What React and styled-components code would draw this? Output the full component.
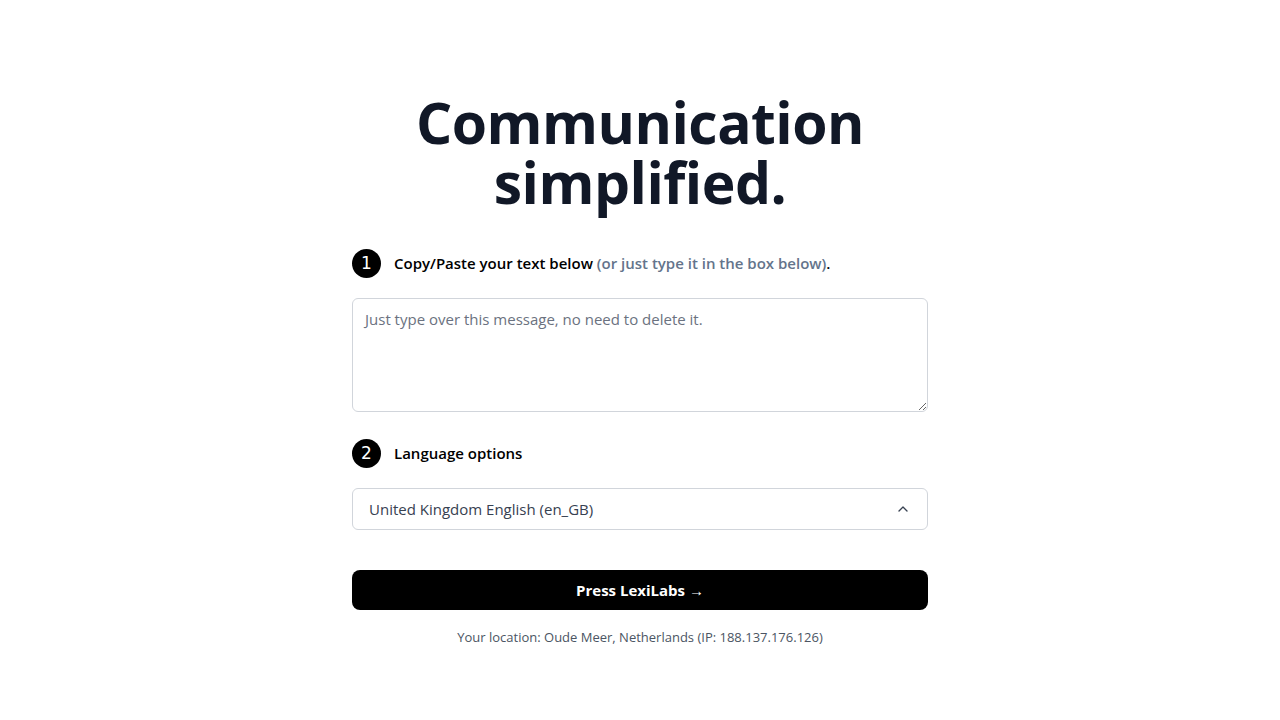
import React from "react";
import styled, { createGlobalStyle } from "styled-components";
import { ChevronUp } from "lucide-react";

const GlobalStyle = createGlobalStyle`
  * {
    box-sizing: border-box;
  }

  body {
    margin: 0;
    background: #ffffff;
    font-family: "Open Sans", "Noto Sans", sans-serif;
    color: #111827;
  }
`;

const StepLabel = ({ number, children }) => {
  return (
    <StepRow>
      <StepBadge>{number}</StepBadge>
      <p>{children}</p>
    </StepRow>
  );
};

const App = () => {
  return (
    <>
      <GlobalStyle />
      <PageWrapper>
        <Main>
          <Title>
            <span>Communication</span>
            <span>simplified.</span>
          </Title>

          <Section>
            <StepLabel number="1">
              Copy/Paste your text below{" "}
              <Muted>(or just type it in the box below)</Muted>.
            </StepLabel>
            <TextBox placeholder="Just type over this message, no need to delete it." />
          </Section>

          <Section>
            <StepLabel number="2">Language options</StepLabel>
            <SelectBox>
              <span>United Kingdom English (en_GB)</span>
              <ChevronUp size={16} strokeWidth={2} />
            </SelectBox>
          </Section>

          <SubmitButton>Press LexiLabs →</SubmitButton>
          <Location>
            Your location: Oude Meer, Netherlands (IP: 188.137.176.126)
          </Location>
        </Main>
      </PageWrapper>
    </>
  );
};

export default App;

const PageWrapper = styled.div`
  display: flex;
  justify-content: center;
  padding-top: 92px;
`;

const Main = styled.main`
  width: 576px;
  display: flex;
  flex-direction: column;
`;

const Title = styled.h1`
  margin: 0 0 36px;
  display: flex;
  flex-direction: column;
  align-items: center;
  text-align: center;
  font-size: 57px;
  line-height: 60px;
  font-weight: 700;
  letter-spacing: -0.5px;
  color: #111827;

  span {
    display: block;
  }
`;

const Section = styled.section`
  display: flex;
  flex-direction: column;
  gap: 20px;
  margin-bottom: 26px;
`;

const StepRow = styled.div`
  display: flex;
  align-items: center;
  gap: 13px;
  height: 30px;

  p {
    margin: 0;
    font-size: 15px;
    font-weight: 600;
    color: #000000;
  }
`;

const StepBadge = styled.span`
  width: 29px;
  height: 29px;
  border-radius: 50%;
  background: #000000;
  color: #ffffff;
  display: flex;
  align-items: center;
  justify-content: center;
  font-size: 17px;
  font-weight: 400;
  font-family: "DejaVu Sans", sans-serif;
  flex-shrink: 0;
`;

const Muted = styled.span`
  color: #64748b;
`;

const TextBox = styled.textarea`
  width: 100%;
  height: 114px;
  padding: 10px 12px;
  border: 1px solid #d1d5db;
  border-radius: 6px;
  font-family: inherit;
  font-size: 15px;
  color: #111827;
  resize: vertical;
  outline: none;

  &::placeholder {
    color: #6b7280;
  }
`;

const SelectBox = styled.div`
  display: flex;
  align-items: center;
  justify-content: space-between;
  height: 42px;
  padding: 0 16px;
  border: 1px solid #d1d5db;
  border-radius: 6px;
  font-size: 15px;
  color: #374151;

  svg {
    color: #374151;
  }
`;

const SubmitButton = styled.button`
  margin-top: 14px;
  height: 40px;
  border: none;
  border-radius: 8px;
  background: #000000;
  color: #ffffff;
  font-family: inherit;
  font-size: 15px;
  font-weight: 700;
  cursor: pointer;
`;

const Location = styled.p`
  margin: 18px 0 0;
  text-align: center;
  font-size: 13px;
  color: #4b5563;
`;
